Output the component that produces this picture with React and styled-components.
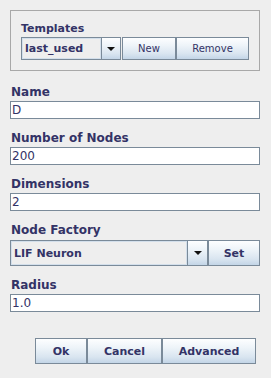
import React from 'react';
import styled, { createGlobalStyle } from 'styled-components';

const GlobalStyle = createGlobalStyle`
  body {
    margin: 0;
    background: #eeeeee;
    font-family: "DejaVu Sans", Verdana, sans-serif;
  }
`;

const Dialog = styled.div`
  width: 271px;
  box-sizing: border-box;
  padding: 10px 11px 0 10px;
  display: flex;
  flex-direction: column;
`;

const TemplatesPanel = styled.div`
  border: 1px solid #a8a8a8;
  padding: 10px 0;
  display: flex;
  justify-content: center;
`;

const TemplatesInner = styled.div`
  display: flex;
  flex-direction: column;
`;

const Label = styled.div`
  font-size: ${p => (p.small ? '11px' : '12px')};
  font-weight: bold;
  line-height: 16px;
  color: #333366;
  padding-left: ${p => (p.small ? '0' : '1px')};
  margin-top: ${p => p.gap || 0}px;
`;

const Row = styled.div`
  display: flex;
  height: ${p => p.height}px;
  margin-top: ${p => p.top || 0}px;
`;

const TextField = styled.div`
  height: 18px;
  box-sizing: border-box;
  margin-top: 1px;
  border: 1px solid #7a8a99;
  background: #ffffff;
  font-size: 12px;
  line-height: 16px;
  padding-left: 1px;
  color: #333366;
`;

const Combo = styled.div`
  display: flex;
  width: ${p => p.width}px;
  box-sizing: border-box;
  border: 1px solid #7a8a99;
  background: #eeeeee;
`;

const ComboValue = styled.div`
  flex: 1;
  display: flex;
  align-items: center;
  padding-left: 3px;
  box-shadow: inset 0 0 0 1px #d3dfeb;
  font-size: 11px;
  font-weight: bold;
  color: #333366;
`;

const ArrowButton = styled.div`
  width: ${p => p.width}px;
  border-left: 1px solid #7a8a99;
  display: flex;
  align-items: center;
  justify-content: center;
  background: linear-gradient(to bottom, #fdfeff 0%, #eef4f9 35%, #d9e5f0 75%, #c3d5e7 100%);
`;

const Triangle = styled.div`
  width: 0;
  height: 0;
  border-left: 4px solid transparent;
  border-right: 4px solid transparent;
  border-top: 4px solid #111111;
`;

const Button = styled.div`
  width: ${p => p.width}px;
  box-sizing: border-box;
  border: 1px solid #7a8a99;
  display: flex;
  align-items: center;
  justify-content: center;
  background: linear-gradient(to bottom, #fdfeff 0%, #eef4f9 35%, #d9e5f0 75%, #c3d5e7 100%);
  font-size: ${p => (p.plain ? '10px' : '11px')};
  font-weight: ${p => (p.plain ? 'normal' : 'bold')};
  color: #333366;
  margin-left: ${p => p.left || 0}px;
`;

const ButtonBar = styled.div`
  display: flex;
  justify-content: flex-end;
  height: 26px;
  margin: 26px 4px 0 0;
`;

const fields = [
  { label: 'Name', value: 'D', gap: 13 },
  { label: 'Number of Nodes', value: '200', gap: 11 },
  { label: 'Dimensions', value: '2', gap: 11 },
];

export default function App() {
  return (
    <>
      <GlobalStyle />
      <Dialog>
        <TemplatesPanel>
          <TemplatesInner>
            <Label small>Templates</Label>
            <Row height={23}>
              <Combo width={100}>
                <ComboValue>last_used</ComboValue>
                <ArrowButton width={18}><Triangle /></ArrowButton>
              </Combo>
              <Button plain width={54} left={1}>New</Button>
              <Button plain width={73}>Remove</Button>
            </Row>
          </TemplatesInner>
        </TemplatesPanel>

        {fields.map(f => (
          <React.Fragment key={f.label}>
            <Label gap={f.gap}>{f.label}</Label>
            <TextField>{f.value}</TextField>
          </React.Fragment>
        ))}

        <Label gap={11}>Node Factory</Label>
        <Row height={26} top={2}>
          <Combo width={198}>
            <ComboValue>LIF Neuron</ComboValue>
            <ArrowButton width={19}><Triangle /></ArrowButton>
          </Combo>
          <Button width={52}>Set</Button>
        </Row>

        <Label gap={11}>Radius</Label>
        <TextField>1.0</TextField>

        <ButtonBar>
          <Button width={52}>Ok</Button>
          <Button width={75}>Cancel</Button>
          <Button width={94}>Advanced</Button>
        </ButtonBar>
      </Dialog>
    </>
  );
}
